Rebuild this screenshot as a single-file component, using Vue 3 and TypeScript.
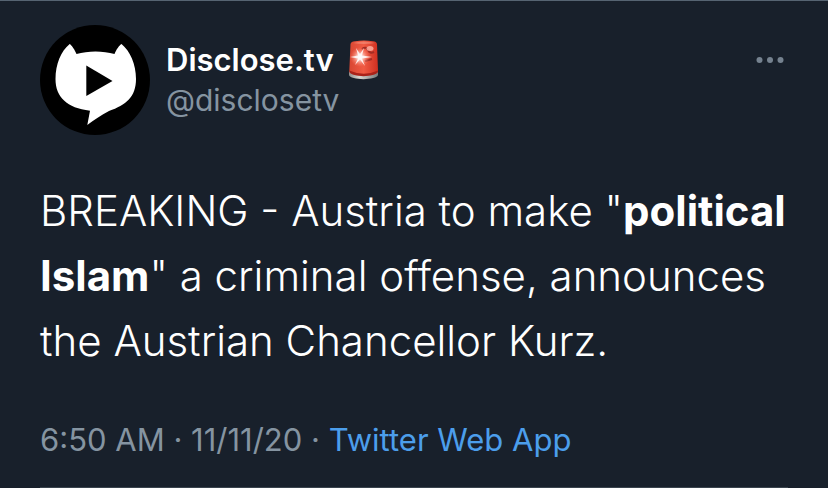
<script setup lang="ts">
interface Segment {
  text: string
  bold?: boolean
}

const author = { name: 'Disclose.tv', handle: '@disclosetv' }
const body: Segment[] = [
  { text: 'BREAKING - Austria to make "' },
  { text: 'political Islam', bold: true },
  { text: '" a criminal offense, announces the Austrian Chancellor Kurz.' },
]
const posted = { time: '6:50 AM', date: '11/11/20', source: 'Twitter Web App' }
</script>

<template>
  <article class="tweet">
    <header class="head">
      <svg class="avatar" viewBox="0 0 110 110" aria-hidden="true">
        <circle cx="55" cy="55" r="55" fill="#000" />
        <path
          fill="#fff"
          d="M29.700 19C31.500 20 35 25 36.500 29C48 25.500 63 25.500 74.500 29C76 25 79.500 20 81.500 19C90 26 96 39 96 54C96 72 86 80 69 86C61 90 54 95 47.300 100L50 85.700C27 83 15.500 72 15.500 54C15.500 39 21 26 29.700 19Z"
        />
        <path fill="#000" d="M46.300 40.500L72.500 56L46.300 71Z" />
      </svg>
      <div class="who">
        <div class="name-row">
          <strong class="name">{{ author.name }}</strong>
          <svg class="siren" viewBox="0 0 32 40" aria-hidden="true">
            <defs>
              <linearGradient id="base" x1="0" x2="1">
                <stop offset="0" stop-color="#8d8d8a" />
                <stop offset="0.35" stop-color="#d8d6d0" />
                <stop offset="1" stop-color="#777a7b" />
              </linearGradient>
              <linearGradient id="lamp" x1="0" x2="1">
                <stop offset="0" stop-color="#d84632" />
                <stop offset="0.5" stop-color="#f05a43" />
                <stop offset="1" stop-color="#cf2f20" />
              </linearGradient>
              <radialGradient id="glow">
                <stop offset="0" stop-color="#fff" />
                <stop offset="0.35" stop-color="#ffd0c6" stop-opacity="0.8" />
                <stop offset="1" stop-color="#ff765f" stop-opacity="0" />
              </radialGradient>
            </defs>
            <path fill="url(#base)" d="M1 31Q16 35 30 31V35C29 40.500 2 40.500 1 35Z" />
            <path fill="url(#lamp)" d="M2.500 4Q3 1.500 7 1.200Q16 0 25 1.200Q28.500 1.500 29 4L30 31C28 37 3 37 1.300 31Z" />
            <path fill="#a92219" d="M1.300 30.500Q16 37 30 30.500V32C27 37.500 4 37.500 1.300 32Z" />
            <path fill="#f5a08c" d="M5 3Q16 0 27 3Q16 5 5 3Z" opacity="0.5" />
            <path fill="none" stroke="#a52c23" stroke-width="2" d="M14 9Q18 6 20 10Q22 14 26 12M17 21L24 19" />
            <ellipse cx="22" cy="8.500" rx="3.500" ry="2.500" fill="#ffb5a8" opacity="0.8" />
            <circle cx="12" cy="17" r="10" fill="url(#glow)" />
            <path
              fill="#fff"
              opacity="0.85"
              d="M8 8L12 14L16 8L14 15.500L24 17L14 18.500L17 26L12 19.500L7 25L10 18.500L2 17L10 15.500Z"
            />
          </svg>
        </div>
        <div class="handle">{{ author.handle }}</div>
      </div>
      <button class="more" type="button" aria-label="More">
        <svg class="dots" viewBox="0 0 32 8" aria-hidden="true">
          <circle cx="3.500" cy="4" r="3" />
          <circle cx="14" cy="4" r="3" />
          <circle cx="24.500" cy="4" r="3" />
        </svg>
      </button>
    </header>

    <p class="body"><template v-for="(part, i) in body" :key="i"><strong v-if="part.bold">{{ part.text }}</strong><template v-else>{{ part.text }}</template></template></p>

    <footer class="meta">
      {{ posted.time }} · {{ posted.date }} · <a href="#">{{ posted.source }}</a>
    </footer>
  </article>
</template>

<style>
body {
  background: #18202b;
}
</style>

<style scoped>
.tweet {
  padding: 24px 40px 0;
  border-top: 1px solid #566472;
  background: #18202b;
  color: #fff;
  font-family: Inter, "Liberation Sans", sans-serif;
}

.head {
  display: flex;
  align-items: flex-start;
  gap: 16px;
}

.avatar {
  flex: none;
  width: 110px;
  height: 110px;
}

.who {
  flex: 1;
  padding-top: 15px;
  font-size: 31px;
  line-height: 40px;
}

.name-row {
  display: flex;
  align-items: center;
  gap: 14px;
}

.name {
  font-weight: 600;
}

.siren {
  width: 32px;
  height: 40px;
}

.handle {
  color: #8594a1;
  font-size: 30px;
}

.more {
  margin-top: 31px;
  padding: 0;
  border: 0;
  background: none;
  cursor: pointer;
}

.dots {
  display: block;
  width: 32px;
  height: 8px;
  fill: #75828f;
}

.body {
  margin: 43px 0 0;
  font-size: 42px;
  font-weight: 300;
  line-height: 65px;
}

.body strong {
  font-weight: 700;
}

.meta {
  margin-top: 47px;
  padding-bottom: 27px;
  border-bottom: 1px solid #3a444e;
  color: #8594a1;
  font-size: 31px;
  line-height: 40px;
}

.meta a {
  color: #4c9eeb;
  text-decoration: none;
}
</style>
